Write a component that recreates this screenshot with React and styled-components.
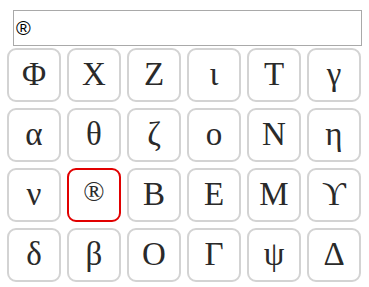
import React, { useState } from 'react';
import styled, { createGlobalStyle } from 'styled-components';

const GlobalStyle = createGlobalStyle`
  body {
    margin: 0;
    background: #fff;
  }
`;

const Page = styled.div`
  padding: 10px 9px 0 7px;
  display: flex;
  flex-direction: column;
  gap: 2px;
`;

const Display = styled.div`
  margin-left: 6px;
  width: 345px;
  height: 34px;
  border: 1px solid #a9a9a9;
  display: flex;
  align-items: center;
  padding-left: 2px;
  font-family: 'Liberation Sans', Arial, sans-serif;
  font-size: 20px;
  color: #000;
`;

const Grid = styled.div`
  display: grid;
  grid-template-columns: repeat(6, 54px);
  grid-auto-rows: 54px;
  gap: 6px;
`;

const Tile = styled.button`
  box-sizing: border-box;
  padding: 0;
  background: #fff;
  border: 2px solid ${(p) => (p.$active ? '#e10000' : '#d3d3d3')};
  border-radius: 9px;
  display: flex;
  align-items: center;
  justify-content: center;
  font-family: 'Liberation Serif', 'Times New Roman', serif;
  font-size: 33px;
  line-height: 1;
  color: #2a2a2a;
  cursor: pointer;
`;

const Glyph = styled.span`
  position: relative;
  font-size: ${(p) => (p.$mark ? '28px' : 'inherit')};
  top: ${(p) => (p.$mark ? '-3px' : '-1px')};
`;

const symbols = [
  'Φ', 'Χ', 'Ζ', 'ι', 'Τ', 'γ',
  'α', 'θ', 'ζ', 'ο', 'Ν', 'η',
  'ν', '®', 'Β', 'Ε', 'Μ', 'ϒ',
  'δ', 'β', 'Ο', 'Γ', 'ψ', 'Δ',
];

export default function App() {
  const [selected, setSelected] = useState(13);

  return (
    <>
      <GlobalStyle />
      <Page>
        <Display>{symbols[selected]}</Display>
        <Grid>
          {symbols.map((s, i) => (
            <Tile key={i} $active={i === selected} onClick={() => setSelected(i)}>
              <Glyph $mark={s === '®'}>{s}</Glyph>
            </Tile>
          ))}
        </Grid>
      </Page>
    </>
  );
}
